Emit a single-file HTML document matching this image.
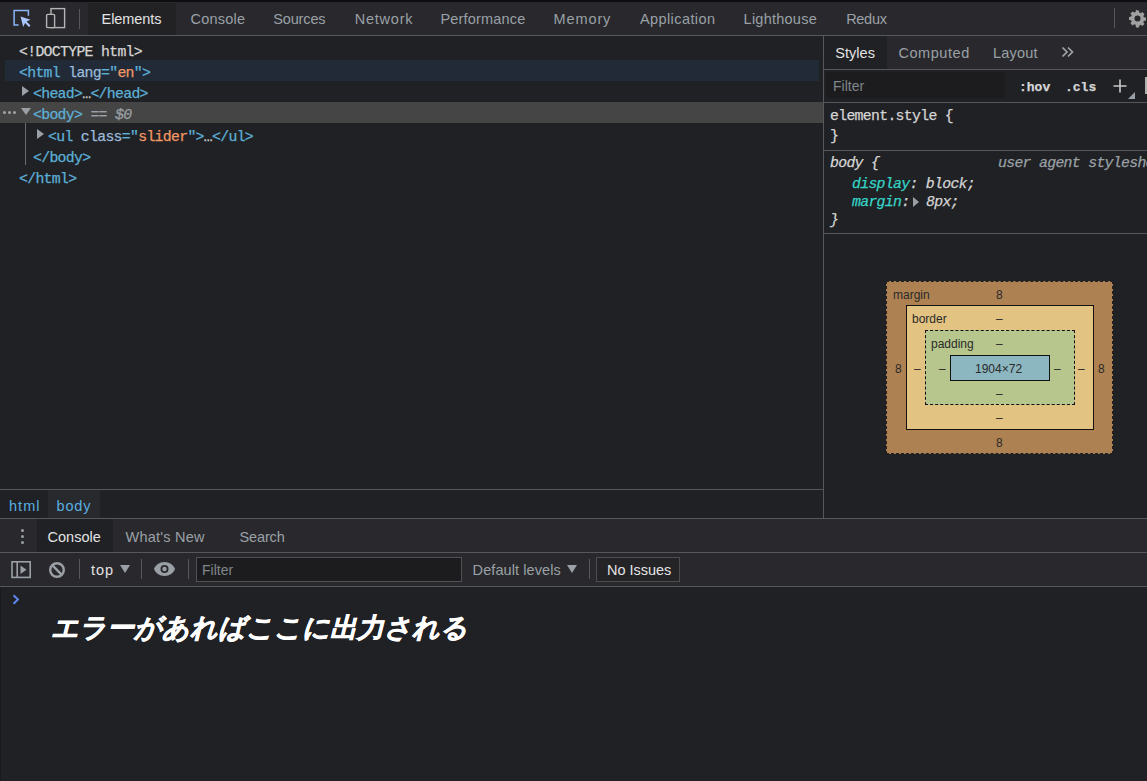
<!DOCTYPE html>
<html><head><meta charset="utf-8">
<style>
*{box-sizing:border-box;margin:0;padding:0}
html,body{width:1147px;height:781px;overflow:hidden;background:#202124}
body{position:relative;font-family:"Liberation Sans",sans-serif;color:#9aa0a6}
.a{position:absolute}
.mono{font-family:"Liberation Mono",monospace;font-size:14.8px;letter-spacing:-0.68px;white-space:pre;-webkit-text-stroke:0.25px currentColor}
.w{font-family:"Liberation Sans",sans-serif;font-size:14.5px;white-space:pre}
.sans{font-family:"Liberation Sans",sans-serif;white-space:pre}
.tag{color:#5db0d7}
.an{color:#9bbbdc}
.av{color:#f29766}
.txt{color:#d5d5d5}
.hl{background:#222a37}
.line{background:#3c3c3c}
</style></head>
<body>
<!-- top frame strip -->
<div class="a" style="left:0;top:0;width:1147px;height:2px;background:#0e0e10"></div>
<!-- main toolbar -->
<div class="a" style="left:0;top:2px;width:1147px;height:33px;background:#29292d"></div>
<div class="a" style="left:0;top:35px;width:1147px;height:1px;background:#56575a"></div>
<!-- inspect icon -->
<svg class="a" style="left:0;top:0" width="80" height="35" viewBox="0 0 80 35">
<path d="M18.6 24.9H14.1V10.4H28.4V15.7" fill="none" stroke="#8ab4f8" stroke-width="1.5"/>
<path d="M20.6 16.6L23.2 27l1.9-3.9 3.9 3.9 1.5-1.5-3.9-3.9 3.9-1.9z" fill="#a8c7fa"/>
<rect x="51" y="8.6" width="13.6" height="19" fill="none" stroke="#b5b5b5" stroke-width="1.4"/>
<rect x="46.6" y="14.4" width="8" height="13.2" rx="1.2" fill="#29292d" stroke="#b5b5b5" stroke-width="1.4"/>
</svg>
<div class="a" style="left:79px;top:9px;width:1px;height:20px;background:#56575a"></div>
<!-- selected tab -->
<div class="a" style="left:88px;top:3px;width:88px;height:32px;background:#222225"></div>
<div class="a" style="left:1114px;top:8px;width:1px;height:20px;background:#56575a"></div>
<!-- gear -->
<svg class="a" style="left:1128px;top:9px" width="19" height="19" viewBox="0 0 20 20">
<path fill="#a0a0a0" d="M10 1.5l1.6.2.4 2.2 1.3.6 1.9-1.3 2.2 2.2-1.3 1.9.6 1.3 2.2.4v3.2l-2.2.4-.6 1.3 1.3 1.9-2.2 2.2-1.9-1.3-1.3.6-.4 2.2H8.4L8 16.6l-1.3-.6-1.9 1.3-2.2-2.2 1.3-1.9-.6-1.3-2.2-.4V8.3l2.2-.4.6-1.3-1.3-1.9 2.2-2.2 1.9 1.3L8 3.1l.4-2.2zM10 6.8a3.2 3.2 0 100 6.4 3.2 3.2 0 000-6.4z"/>
</svg>

<!-- ELEMENTS TREE -->
<div class="a hl" style="left:5px;top:60px;width:814px;height:21px"></div>
<div class="a" style="left:0;top:102px;width:823px;height:21px;background:#454545"></div>
<div class="a mono txt" style="left:19px;top:44px">&lt;!DOCTYPE html&gt;</div>
<div class="a mono" style="left:19px;top:65px"><span class="tag">&lt;html</span> <span class="an">lang</span><span class="tag">="</span><span class="av">en</span><span class="tag">"&gt;</span></div>
<div class="a mono" style="left:33px;top:86px"><span class="tag">&lt;head&gt;</span><span class="txt">…</span><span class="tag">&lt;/head&gt;</span></div>
<div class="a mono" style="left:33px;top:107px"><span class="tag">&lt;body&gt;</span><span style="color:#9aa0a6"> == <i>$0</i></span></div>
<div class="a mono" style="left:48px;top:129px"><span class="tag">&lt;ul</span> <span class="an">class</span><span class="tag">="</span><span class="av">slider</span><span class="tag">"&gt;</span><span class="txt">…</span><span class="tag">&lt;/ul&gt;</span></div>
<div class="a mono" style="left:33px;top:150px"><span class="tag">&lt;/body&gt;</span></div>
<div class="a mono" style="left:19px;top:171px"><span class="tag">&lt;/html&gt;</span></div>
<!-- triangles -->
<svg class="a" style="left:22px;top:86px" width="8" height="10"><path d="M0 0l7 5-7 5z" fill="#9aa0a6"/></svg>
<svg class="a" style="left:21px;top:108px" width="10" height="8"><path d="M0 0h10l-5 7z" fill="#9aa0a6"/></svg>
<svg class="a" style="left:37px;top:129px" width="8" height="10"><path d="M0 0l7 5-7 5z" fill="#9aa0a6"/></svg>
<div class="a" style="left:3px;top:111px;width:14px;height:3px;font-size:0">
 <span style="position:absolute;left:0;top:0;width:3px;height:3px;border-radius:50%;background:#a0a4a8"></span>
 <span style="position:absolute;left:5px;top:0;width:3px;height:3px;border-radius:50%;background:#a0a4a8"></span>
 <span style="position:absolute;left:10px;top:0;width:3px;height:3px;border-radius:50%;background:#a0a4a8"></span>
</div>
<div class="a" style="left:25px;top:123px;width:1px;height:42px;background:#6b6b6b"></div>

<!-- vertical divider -->
<div class="a" style="left:823px;top:36px;width:1px;height:482px;background:#56575a"></div>

<!-- breadcrumbs -->
<div class="a" style="left:0;top:489px;width:823px;height:1px;background:#56575a"></div>
<div class="a" style="left:48px;top:490px;width:52px;height:28px;background:#28292c"></div>

<!-- STYLES PANE -->
<div class="a" style="left:824px;top:36px;width:323px;height:33px;background:#29292d"></div>
<div class="a" style="left:824px;top:36px;width:63px;height:33px;background:#202124"></div>
<svg class="a" style="left:1061px;top:46px" width="14" height="12" viewBox="0 0 14 12"><path d="M1.5 1.5l4.5 4.5-4.5 4.5M7 1.5l4.5 4.5-4.5 4.5" fill="none" stroke="#a0a4a8" stroke-width="1.7"/></svg>
<div class="a" style="left:824px;top:69px;width:323px;height:1px;background:#56575a"></div>
<div class="a" style="left:824px;top:70px;width:323px;height:32px;background:#202124"></div>
<div class="a" style="left:826px;top:72px;width:179px;height:26px;background:#1c1c1e"></div>
<div class="a sans" style="left:833px;top:78px;font-size:14px;color:#80868b">Filter</div>
<div class="a mono" style="left:1019px;top:80px;font-size:13px;letter-spacing:0;color:#d5d5d5;font-weight:bold">:hov</div>
<div class="a mono" style="left:1065px;top:80px;font-size:13px;letter-spacing:0;color:#d5d5d5;font-weight:bold">.cls</div>
<svg class="a" style="left:1113px;top:79px" width="14" height="14" viewBox="0 0 14 14"><path d="M7 0.5v13M0.5 7h13" stroke="#c8c8c8" stroke-width="1.6"/></svg>
<svg class="a" style="left:1128px;top:92px" width="7" height="7"><path d="M7 0v7H0z" fill="#9aa0a6"/></svg>
<div class="a" style="left:1145px;top:77px;width:2px;height:17px;background:#b0b0b0"></div>
<div class="a" style="left:824px;top:102px;width:323px;height:1px;background:#56575a"></div>
<div class="a mono txt" style="left:830px;top:108px">element.style {</div>
<div class="a mono txt" style="left:830px;top:128px">}</div>
<div class="a" style="left:824px;top:150px;width:323px;height:1px;background:#56575a"></div>
<div class="a mono txt" style="left:830px;top:155px;font-style:italic">body {</div>
<div class="a mono" style="left:998px;top:155px;font-style:italic;color:#9aa0a6">user agent stylesheet</div>
<div class="a mono" style="left:852px;top:176px;font-style:italic"><span style="color:#35d4c7">display</span><span class="txt">: block;</span></div>
<div class="a mono" style="left:852px;top:194px;font-style:italic"><span style="color:#35d4c7">margin</span><span class="txt">: </span></div>
<svg class="a" style="left:913px;top:197px" width="7" height="10"><path d="M0 0l6 5-6 5z" fill="#9aa0a6"/></svg>
<div class="a mono txt" style="left:926px;top:194px;font-style:italic">8px;</div>
<div class="a mono txt" style="left:830px;top:212px;font-style:italic">}</div>
<div class="a" style="left:824px;top:233px;width:323px;height:1px;background:#56575a"></div>

<!-- box model -->
<div class="a" style="left:886px;top:281px;width:227px;height:173px;background:#ae8152;border:1px dashed #222"></div>
<div class="a" style="left:906px;top:305px;width:188px;height:125px;background:#e3c381;border:1px solid #111"></div>
<div class="a" style="left:925px;top:330px;width:150px;height:75px;background:#b7c68d;border:1px dashed #111"></div>
<div class="a" style="left:950px;top:355px;width:100px;height:26px;background:#8cb6c0;border:1px solid #111"></div>
<div class="a sans" style="left:893px;top:288px;font-size:12px;color:#2a2a2a">margin</div>
<div class="a sans" style="left:996px;top:288px;font-size:12px;color:#2a2a2a">8</div>
<div class="a sans" style="left:912px;top:312px;font-size:12px;color:#2a2a2a">border</div>
<div class="a sans" style="left:996px;top:312px;font-size:12px;color:#2a2a2a">–</div>
<div class="a sans" style="left:931px;top:337px;font-size:12px;color:#2a2a2a">padding</div>
<div class="a sans" style="left:996px;top:337px;font-size:12px;color:#2a2a2a">–</div>
<div class="a sans" style="left:975px;top:362px;font-size:12px;color:#2a2a2a">1904×72</div>
<div class="a sans" style="left:895px;top:362px;font-size:12px;color:#2a2a2a">8</div>
<div class="a sans" style="left:914px;top:362px;font-size:12px;color:#2a2a2a">–</div>
<div class="a sans" style="left:939px;top:362px;font-size:12px;color:#2a2a2a">–</div>
<div class="a sans" style="left:1054px;top:362px;font-size:12px;color:#2a2a2a">–</div>
<div class="a sans" style="left:1078px;top:362px;font-size:12px;color:#2a2a2a">–</div>
<div class="a sans" style="left:1098px;top:362px;font-size:12px;color:#2a2a2a">8</div>
<div class="a sans" style="left:996px;top:387px;font-size:12px;color:#2a2a2a">–</div>
<div class="a sans" style="left:996px;top:411px;font-size:12px;color:#2a2a2a">–</div>
<div class="a sans" style="left:996px;top:436px;font-size:12px;color:#2a2a2a">8</div>

<!-- DRAWER -->
<div class="a" style="left:0;top:518px;width:1147px;height:1px;background:#56575a"></div>
<div class="a" style="left:0;top:519px;width:1147px;height:33px;background:#29292d"></div>
<div class="a" style="left:37px;top:519px;width:76px;height:33px;background:#202124"></div>
<div class="a" style="left:21px;top:529px;width:3px;height:3px;border-radius:2px;background:#9aa0a6"></div>
<div class="a" style="left:21px;top:535px;width:3px;height:3px;border-radius:2px;background:#9aa0a6"></div>
<div class="a" style="left:21px;top:541px;width:3px;height:3px;border-radius:2px;background:#9aa0a6"></div>
<div class="a" style="left:0;top:552px;width:1147px;height:1px;background:#56575a"></div>
<div class="a" style="left:0;top:553px;width:1147px;height:33px;background:#29292d"></div>
<!-- sidebar icon -->
<svg class="a" style="left:10px;top:560px" width="22" height="20" viewBox="0 0 22 20">
<rect x="2" y="1.8" width="18.2" height="15.6" fill="none" stroke="#9aa0a6" stroke-width="1.6"/>
<path d="M7.2 2v15" stroke="#9aa0a6" stroke-width="1.6"/>
<path d="M10.5 5.5l6 4.2-6 4.2z" fill="#9aa0a6"/>
</svg>
<!-- clear icon -->
<svg class="a" style="left:48px;top:561px" width="18" height="18" viewBox="0 0 18 18">
<circle cx="9" cy="9" r="6.8" fill="none" stroke="#9aa0a6" stroke-width="2.4"/>
<path d="M4.2 4.2l9.6 9.6" stroke="#9aa0a6" stroke-width="2.4"/>
</svg>
<div class="a" style="left:79px;top:559px;width:1px;height:20px;background:#56575a"></div>
<svg class="a" style="left:120px;top:565px" width="10" height="8"><path d="M0 0h10l-5 8z" fill="#9aa0a6"/></svg>
<div class="a" style="left:141px;top:559px;width:1px;height:20px;background:#56575a"></div>
<!-- eye -->
<svg class="a" style="left:153px;top:561px" width="23" height="16" viewBox="0 0 23 16">
<path d="M11.5 1C6.5 1 2.5 4 1 8c1.5 4 5.5 7 10.5 7s9-3 10.5-7C20.5 4 16.5 1 11.5 1z" fill="#9aa0a6"/>
<circle cx="11.5" cy="8" r="4" fill="#29292d"/>
<circle cx="11.5" cy="8" r="2.2" fill="#9aa0a6"/>
</svg>
<div class="a" style="left:188px;top:559px;width:1px;height:20px;background:#56575a"></div>
<div class="a" style="left:196px;top:557px;width:266px;height:25px;background:#1c1c1e;border:1px solid #505154"></div>
<div class="a sans" style="left:202px;top:562px;font-size:14px;color:#80868b">Filter</div>
<svg class="a" style="left:567px;top:565px" width="10" height="8"><path d="M0 0h10l-5 8z" fill="#9aa0a6"/></svg>
<div class="a" style="left:589px;top:559px;width:1px;height:20px;background:#56575a"></div>
<div class="a" style="left:596px;top:557px;width:84px;height:25px;border:1px solid #4c4d50;background:#242427"></div>
<div class="a" style="left:0;top:586px;width:1147px;height:1px;background:#56575a"></div>
<!-- prompt -->
<svg class="a" style="left:12px;top:594px" width="9" height="11"><path d="M1.5 1.2l4.5 4.3-4.5 4.3" fill="none" stroke="#5b8af5" stroke-width="1.9"/></svg>
<div class="a" style="left:51px;top:610px;font-size:27px;font-weight:bold;font-style:italic;color:#fff;white-space:pre;-webkit-text-stroke:0.6px #fff">エラーがあればここに出力される</div>
<div class="a" style="left:0;top:587px;width:1px;height:194px;background:#1a1b1d"></div>
<!-- UI words -->
<div class="a w" style="left:101.6px;top:11px;letter-spacing:-0.086px;color:#e3e3e3">Elements</div>
<div class="a w" style="left:190.5px;top:11px;letter-spacing:0.233px">Console</div>
<div class="a w" style="left:273.2px;top:11px;letter-spacing:-0.133px">Sources</div>
<div class="a w" style="left:354.8px;top:11px;letter-spacing:0.75px">Network</div>
<div class="a w" style="left:440.5px;top:11px;letter-spacing:0.17px">Performance</div>
<div class="a w" style="left:553.5px;top:11px;letter-spacing:0.9px">Memory</div>
<div class="a w" style="left:639.9px;top:11px;letter-spacing:0.42px">Application</div>
<div class="a w" style="left:743.6px;top:11px;letter-spacing:0.244px">Lighthouse</div>
<div class="a w" style="left:846.2px;top:11px;letter-spacing:-0.3px">Redux</div>
<div class="a w" style="left:835.3px;top:45px;letter-spacing:0.02px;color:#e3e3e3">Styles</div>
<div class="a w" style="left:898.4px;top:45px;letter-spacing:0.557px">Computed</div>
<div class="a w" style="left:992.9px;top:45px;letter-spacing:0.24px">Layout</div>
<div class="a w" style="left:8.9px;top:498px;letter-spacing:1.1px;color:#5aaee0">html</div>
<div class="a w" style="left:56.5px;top:498px;letter-spacing:0.833px;color:#5aaee0">body</div>
<div class="a w" style="left:47.4px;top:529px;letter-spacing:0.05px;color:#e3e3e3">Console</div>
<div class="a w" style="left:125.6px;top:529px;letter-spacing:0.211px">What's New</div>
<div class="a w" style="left:239.6px;top:529px;letter-spacing:-0.16px">Search</div>
<div class="a w" style="left:91.0px;top:562px;letter-spacing:1.0px;color:#e3e3e3">top</div>
<div class="a w" style="left:472.6px;top:562px;letter-spacing:0.092px">Default levels</div>
<div class="a w" style="left:607.1px;top:562px;letter-spacing:-0.025px;color:#e3e3e3">No Issues</div>
</body></html>
